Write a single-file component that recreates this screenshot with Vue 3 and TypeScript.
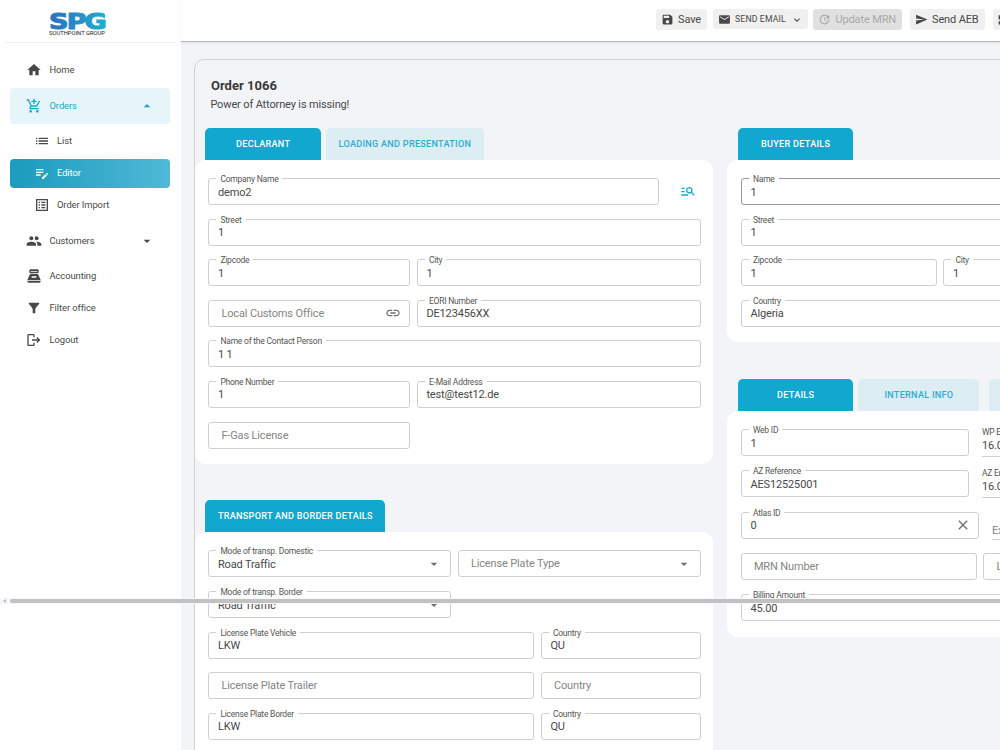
<script setup lang="ts">
import { ref } from 'vue';

interface NavItem {
  label: string;
  icon: string;
  kind?: 'group' | 'sub';
  open?: boolean;
}

interface Field {
  label: string;
  value?: string;
  width: number;
  suffix?: 'select' | 'link' | 'clear';
  type?: 'date' | 'date-low';
  hovered?: boolean;
  lookup?: boolean;
}

interface Panel {
  tabs: { label: string; width: number; gap?: number }[];
  rows: Field[][];
  side: 'left' | 'right';
  name: string;
}

const icons: Record<string, string> = {
  home: 'M10 20v-6h4v6h5v-8h3L12 3 2 12h3v8z',
  cart: 'M11 9h2V6h3V4h-3V1h-2v3H8v2h3v3zm-4 9c-1.1 0-1.99.9-1.99 2S5.9 22 7 22s2-.9 2-2-.9-2-2-2zm10 0c-1.1 0-1.99.9-1.99 2s.89 2 1.99 2 2-.9 2-2-.9-2-2-2zm-9.83-3.25l.03-.12.9-1.63h7.45c.75 0 1.41-.41 1.75-1.03l3.86-7.01L19.42 4h-.01l-1.1 2-2.76 5H8.53l-.13-.27L6.16 6l-.95-2-.94-2H1v2h2l3.6 7.59-1.35 2.45c-.16.28-.25.61-.25.96 0 1.1.9 2 2 2h12v-2H7.42c-.13 0-.25-.11-.25-.25z',
  list: 'M3 13h2v-2H3v2zm0 4h2v-2H3v2zm0-8h2V7H3v2zm4 4h14v-2H7v2zm0 4h14v-2H7v2zM7 7v2h14V7H7z',
  edit: 'M3 10h11v2H3v-2zm0-2h11V6H3v2zm0 8h7v-2H3v2zm15.01-3.13l.71-.71c.39-.39 1.02-.39 1.41 0l.71.71c.39.39.39 1.02 0 1.41l-.71.71-2.12-2.12zm-.71.71l-5.3 5.3V21h2.12l5.3-5.3-2.12-2.12z',
  listAlt: 'M19 5v14H5V5h14m1.1-2H3.9c-.5 0-.9.4-.9.9v16.2c0 .4.4.9.9.9h16.2c.4 0 .9-.5.9-.9V3.9c0-.5-.5-.9-.9-.9zM11 7h6v2h-6V7zm0 4h6v2h-6v-2zm0 4h6v2h-6zM7 7h2v2H7zm0 4h2v2H7zm0 4h2v2H7z',
  people: 'M16 11c1.66 0 2.99-1.34 2.99-3S17.66 5 16 5s-3 1.34-3 3 1.34 3 3 3zm-8 0c1.66 0 2.99-1.34 2.99-3S9.66 5 8 5 5 6.34 5 8s1.34 3 3 3zm0 2c-2.33 0-7 1.17-7 3.5V19h14v-2.5c0-2.33-4.67-3.5-7-3.5zm8 0c-.29 0-.62.02-.97.05 1.16.84 1.97 1.97 1.97 3.45V19h6v-2.5c0-2.33-4.67-3.5-7-3.5z',
  register: 'M17 2H7c-1.1 0-2 .9-2 2v2c0 1.1.9 2 2 2h10c1.1 0 2-.9 2-2V4c0-1.1-.9-2-2-2zm0 3.500H7V4.500h10v1zm3 16.500H4c-1.1 0-2-.9-2-2v-1h20v1c0 1.1-.9 2-2 2zm-1.47-11.81C18.21 9.47 17.49 9 16.7 9H7.3c-.79 0-1.51.47-1.83 1.19L2 18h20l-3.47-7.81zM15.500 15h-7v-1h7v1zm0-2h-7v-1h7v1z',
  filter: 'M4.25 5.61C6.27 8.2 10 13 10 13v6c0 .55.45 1 1 1h2c.55 0 1-.45 1-1v-6s3.72-4.8 5.74-7.39C20.25 4.95 19.78 4 18.95 4H5.04c-.83 0-1.3.95-.79 1.61z',
  logout: 'M4 3h7c1.1 0 2 .9 2 2v3h-2V5H4v14h7v-3h2v3c0 1.1-.9 2-2 2H4c-1.1 0-2-.9-2-2V5c0-1.1.9-2 2-2zm13 4.5L21.5 12 17 16.5l-1.4-1.4 2.1-2.1H9v-2h8.700l-2.1-2.1z',
  save: 'M17 3H5c-1.11 0-2 .9-2 2v14c0 1.1.89 2 2 2h14c1.1 0 2-.9 2-2V7l-4-4zm-5 16c-1.66 0-3-1.34-3-3s1.340-3 3-3 3 1.340 3 3-1.340 3-3 3zm3-10H5V5h10v4z',
  mail: 'M20 4H4c-1.1 0-2 .9-2 2v12c0 1.1.9 2 2 2h16c1.1 0 2-.9 2-2V6c0-1.1-.9-2-2-2zm0 4l-8 5-8-5V6l8 5 8-5v2z',
  update: 'M21 10.12h-6.780l2.740-2.820C14.23 4.600 9.810 4.500 7.080 7.200c-2.730 2.710-2.730 7.080 0 9.800 2.730 2.700 7.150 2.700 9.880 0C18.320 15.650 19 14.080 19 12.100h2c0 1.980-.88 4.550-2.640 6.290-3.510 3.480-9.210 3.480-12.720 0-3.500-3.470-3.530-9.110-.02-12.580s9.140-3.470 12.650 0L21 3v7.120M12.500 8v4.250l3.500 2.080-.72 1.210L11 13V8h1.500z',
  send: 'M2.010 21L23 12 2.010 3 2 10l15 2-15 2z',
  lookup: 'M7 9H2V7h5v2zm0 3H2v2h5v-2zm13.590 7l-3.830-3.830c-.8.520-1.740.830-2.760.830-2.760 0-5-2.240-5-5s2.240-5 5-5 5 2.240 5 5c0 1.020-.31 1.960-.83 2.750L22 17.590 20.590 19zM17 11c0-1.650-1.350-3-3-3s-3 1.350-3 3 1.350 3 3 3 3-1.350 3-3zM2 19h10v-2H2v2z',
  link: 'M3.900 12c0-1.710 1.390-3.100 3.100-3.100h4V7H7c-2.760 0-5 2.240-5 5s2.240 5 5 5h4v-1.900H7c-1.710 0-3.100-1.390-3.100-3.100zM8 13h8v-2H8v2zm9-6h-4v1.900h4c1.710 0 3.100 1.390 3.100 3.100s-1.390 3.100-3.100 3.100h-4V17h4c2.760 0 5-2.240 5-5s-2.240-5-5-5z',
  select: 'M7 10l5 5 5-5z',
  clear: 'M19 6.410L17.590 5 12 10.590 6.410 5 5 6.410 10.590 12 5 17.590 6.410 19 12 13.410 17.590 19 19 17.590 13.410 12z',
  chevron: 'M7.410 8.590L12 13.170l4.590-4.580L18 10l-6 6-6-6z',
};

const nav: NavItem[] = [
  { label: 'Home', icon: 'home' },
  { label: 'Orders', icon: 'cart', kind: 'group', open: true },
  { label: 'List', icon: 'list', kind: 'sub' },
  { label: 'Editor', icon: 'edit', kind: 'sub' },
  { label: 'Order Import', icon: 'listAlt', kind: 'sub' },
  { label: 'Customers', icon: 'people', kind: 'group' },
  { label: 'Accounting', icon: 'register' },
  { label: 'Filter office', icon: 'filter' },
  { label: 'Logout', icon: 'logout' },
];
const current = ref('Editor');

const panels: Panel[] = [
  {
    name: 'declarant',
    side: 'left',
    tabs: [
      { label: 'Declarant', width: 115.5 },
      { label: 'Loading and Presentation', width: 158 },
    ],
    rows: [
      [{ label: 'Company Name', value: 'demo2', width: 451, lookup: true }],
      [{ label: 'Street', value: '1', width: 492.5 }],
      [{ label: 'Zipcode', value: '1', width: 202 }, { label: 'City', value: '1', width: 284 }],
      [{ label: 'Local Customs Office', width: 202, suffix: 'link' }, { label: 'EORI Number', value: 'DE123456XX', width: 284 }],
      [{ label: 'Name of the Contact Person', value: '1 1', width: 492.5 }],
      [{ label: 'Phone Number', value: '1', width: 202 }, { label: 'E-Mail Address', value: 'test@test12.de', width: 284 }],
      [{ label: 'F-Gas License', width: 202 }],
    ],
  },
  {
    name: 'transport',
    side: 'left',
    tabs: [{ label: 'Transport and Border Details', width: 180 }],
    rows: [
      [{ label: 'Mode of transp. Domestic', value: 'Road Traffic', width: 243, suffix: 'select' }, { label: 'License Plate Type', width: 243, suffix: 'select' }],
      [{ label: 'Mode of transp. Border', value: 'Road Traffic', width: 243, suffix: 'select' }],
      [{ label: 'License Plate Vehicle', value: 'LKW', width: 326 }, { label: 'Country', value: 'QU', width: 160 }],
      [{ label: 'License Plate Trailer', width: 326 }, { label: 'Country', width: 160 }],
      [{ label: 'License Plate Border', value: 'LKW', width: 326 }, { label: 'Country', value: 'QU', width: 160 }],
      [],
    ],
  },
  {
    name: 'buyer',
    side: 'right',
    tabs: [{ label: 'Buyer Details', width: 115.5 }],
    rows: [
      [{ label: 'Name', value: '1', width: 492, hovered: true }],
      [{ label: 'Street', value: '1', width: 492 }],
      [{ label: 'Zipcode', value: '1', width: 196 }, { label: 'City', value: '1', width: 289 }],
      [{ label: 'Country', value: 'Algeria', width: 492 }],
    ],
  },
  {
    name: 'details',
    side: 'right',
    tabs: [
      { label: 'Details', width: 115.5 },
      { label: 'Internal Info', width: 121 },
      { label: 'Files', width: 115.5, gap: 5 },
    ],
    rows: [
      [{ label: 'Web ID', value: '1', width: 228 }, { label: 'WP End', value: '16.07.2025', width: 120, type: 'date' }],
      [{ label: 'AZ Reference', value: 'AES12525001', width: 228 }, { label: 'AZ End', value: '16.07.2025', width: 120, type: 'date' }],
      [{ label: 'Atlas ID', value: '0', width: 238, suffix: 'clear' }, { label: 'Export', width: 120, type: 'date-low' }],
      [{ label: 'MRN Number', width: 236 }, { label: 'LRN', width: 249 }],
      [{ label: 'Billing Amount', value: '45.00', width: 492 }],
    ],
  },
];
const columns = (['left', 'right'] as const).map((side) => ({
  side,
  panels: panels.filter((p) => p.side === side),
}));
</script>

<template>
  <div class="app">
    <aside class="sidebar">
      <div class="brand">
        <svg class="logo" viewBox="0 0 58 24">
          <defs>
            <linearGradient id="brand" x1="0" x2="1">
              <stop offset="0" stop-color="#2c6fc0" />
              <stop offset="1" stop-color="#20acd0" />
            </linearGradient>
          </defs>
          <text class="mark" x="1" y="17" textLength="56" lengthAdjust="spacingAndGlyphs" fill="url(#brand)" stroke="url(#brand)">SPG</text>
          <text class="caption" x="1" y="23" textLength="56" lengthAdjust="spacingAndGlyphs">SOUTHPOINT GROUP</text>
        </svg>
      </div>
      <nav class="menu">
        <a
          v-for="item in nav"
          :key="item.label"
          class="item"
          :class="[item.kind, { open: item.open, active: item.label === current }]"
          @click="current = item.label"
        >
          <svg class="icon" viewBox="0 0 24 24"><path :d="icons[item.icon]" /></svg>
          <span class="label">{{ item.label }}</span>
          <svg v-if="item.kind === 'group'" class="icon caret" viewBox="0 0 24 24"><path :d="icons.select" /></svg>
        </a>
      </nav>
    </aside>

    <main class="content">
      <header class="toolbar">
        <button class="btn save"><svg class="icon" viewBox="0 0 24 24"><path :d="icons.save" /></svg>Save</button>
        <button class="btn email">
          <svg class="icon" viewBox="0 0 24 24"><path :d="icons.mail" /></svg>SEND EMAIL
          <svg class="icon chevron" viewBox="0 0 24 24"><path :d="icons.chevron" /></svg>
        </button>
        <button class="btn update" disabled><svg class="icon" viewBox="0 0 24 24"><path :d="icons.update" /></svg>Update MRN</button>
        <button class="btn aeb"><svg class="icon" viewBox="0 0 24 24"><path :d="icons.send" /></svg>Send AEB</button>
        <button class="btn more">
          <svg class="icon" viewBox="0 0 24 24"><path d="M3 4h8v5H8v3H3zM3 15h5v2h3v4H3zM14 4h7v7h-7zM14 14h7v7h-7z" /></svg>
        </button>
      </header>

      <section class="order">
        <h1>Order 1066</h1>
        <p class="notice">Power of Attorney is missing!</p>
        <div class="columns">
          <div v-for="col in columns" :key="col.side" class="column" :class="col.side">
            <div v-for="panel in col.panels" :key="panel.name" class="block" :class="panel.name">
              <div class="tabs">
                <button
                  v-for="(tab, i) in panel.tabs"
                  :key="tab.label"
                  class="tab"
                  :class="{ selected: i === 0 }"
                  :style="{ width: tab.width + 'px', marginLeft: (tab.gap || 0) + 'px' }"
                >{{ tab.label }}</button>
              </div>
              <div class="card">
                <div v-for="(row, r) in panel.rows" :key="r" class="row">
                  <template v-for="(field, f) in row" :key="f">
                    <div
                      class="field"
                      :class="[field.type, { filled: field.value, hovered: field.hovered }]"
                      :style="{ width: field.width + 'px' }"
                    >
                      <label class="name">{{ field.label }}</label>
                      <span v-if="field.value" class="value">{{ field.value }}</span>
                      <svg v-if="field.suffix" class="icon" :class="field.suffix" viewBox="0 0 24 24"><path :d="icons[field.suffix]" /></svg>
                    </div>
                    <svg v-if="field.lookup" class="icon lookup" viewBox="0 0 24 24"><path :d="icons.lookup" /></svg>
                  </template>
                </div>
              </div>
            </div>
          </div>
        </div>
      </section>
    </main>

    <div class="scrollbar">
      <span class="arrow"></span>
      <span class="thumb"></span>
    </div>
  </div>
</template>

<style>
body {
  margin: 0;
  overflow: hidden;
}
</style>

<style scoped>
.app {
  position: relative;
  display: flex;
  width: 1000px;
  height: 750px;
  overflow: hidden;
  background: #f3f4f8;
  color: #484848;
  font-family: Roboto, sans-serif;
  font-size: 11px;
  letter-spacing: -.14px;
}

.icon {
  flex: none;
  width: 16px;
  height: 16px;
  fill: currentColor;
}

button {
  border: none;
  font-family: inherit;
  letter-spacing: inherit;
  color: inherit;
  padding: 0;
}

/* sidebar */
.sidebar {
  flex: none;
  width: 180.5px;
  background: #fff;
}

.brand {
  box-sizing: border-box;
  height: 43px;
  margin: 0 5px;
  padding: 12px 0 0 43px;
  border-bottom: 1px solid #f0f0f0;
}

.logo {
  display: block;
  width: 58px;
  height: 24px;
  overflow: visible;
}

.mark {
  font: bold 21px "DejaVu Sans", sans-serif;
  stroke-width: 1px;
  letter-spacing: -1.5px;
}

.caption {
  font: 400 5px Roboto, sans-serif;
  fill: #222;
  letter-spacing: 0;
}

.menu {
  display: flex;
  flex-direction: column;
  gap: 3.4px;
  padding: 13px 10.5px 0 10px;
}

.item {
  display: flex;
  align-items: center;
  box-sizing: border-box;
  height: 28.6px;
  padding-left: 16px;
  border-radius: 4px;
  font-size: 9.4px;
  letter-spacing: -.08px;
  cursor: pointer;
}

.item .label {
  flex: 1;
  margin-left: 7.5px;
  padding-bottom: 1px;
}

.item.group {
  height: 35.6px;
  padding-right: 15.5px;
}

.item.sub {
  padding-left: 23.5px;
}

.item.open {
  background: #e6f5f9;
  color: #18a6cd;
}

.item.open .caret {
  transform: rotate(180deg);
}

.item.active {
  background: linear-gradient(90deg, #1b9bbd, #4fb9d6);
  color: #fff;
}

/* toolbar */
.content {
  flex: 1;
  min-width: 0;
}

.toolbar {
  display: flex;
  align-items: flex-start;
  box-sizing: border-box;
  height: 42px;
  padding: 9px 0 0 475px;
  background: #fff;
  border-bottom: 1px solid #b5b5b7;
  box-shadow: 0 1px 2px rgba(0, 0, 0, .08);
}

.btn {
  display: flex;
  flex: none;
  align-items: center;
  box-sizing: border-box;
  height: 21px;
  padding-left: 5px;
  border-radius: 3px;
  background: #f0f0f0;
  font-size: 11px;
  white-space: nowrap;
}

.btn .icon {
  width: 13px;
  height: 13px;
  margin-right: 4.5px;
}

.btn.save { width: 51.5px; }
.btn.email {
  width: 95px;
  height: 20px;
  margin-left: 5.5px;
  font-size: 8.7px;
  letter-spacing: .14px;
}
.btn.email .chevron { width: 12px; height: 12px; margin: 1px 0 0 5px; }
.btn.update { width: 88.5px; margin-left: 5.5px; background: #e0e0e0; color: #a8a8a8; }
.btn.aeb { width: 75px; margin-left: 8px; }
.btn.more { width: 60px; margin-left: 8px; padding-left: 4px; }

/* order */
.order {
  box-sizing: border-box;
  width: 1100px;
  height: 800px;
  margin: 17px 0 0 13.4px;
  border: 1px solid #d0d2d6;
  border-radius: 10px;
}

h1 {
  margin: 17.5px 0 0 16px;
  font-size: 13px;
  font-weight: 700;
  line-height: 16px;
  letter-spacing: .04px;
  color: #3a3a3a;
}

.notice {
  margin: 4.5px 0 0 15.5px;
  line-height: 14px;
}

.columns {
  display: flex;
  gap: 14px;
  margin-top: 16px;
}

.column {
  flex: none;
  width: 518.5px;
}

.block + .block {
  margin-top: 37px;
}

.left .block + .block {
  margin-top: 36.4px;
}

.tabs {
  display: flex;
  gap: 5px;
  padding-left: 10.5px;
}

.tab {
  flex: none;
  height: 32px;
  padding-bottom: 1px;
  border-radius: 5px 5px 0 0;
  background: #dcedf4;
  color: #2fabd1;
  font-size: 9.1px;
  font-weight: 500;
  letter-spacing: .28px;
  text-transform: uppercase;
  white-space: nowrap;
}

.tab.selected {
  background: #11a7ce;
  color: #fff;
}

.card {
  display: flex;
  flex-direction: column;
  gap: 13.6px;
  padding: 18px 13px 15.5px 13.5px;
  border-radius: 11px;
  background: #fff;
}

.details .card {
  gap: 14.2px;
}

.row {
  display: flex;
  gap: 6.500px;
  height: 27px;
}

.field {
  position: relative;
  display: flex;
  flex: none;
  align-items: center;
  box-sizing: border-box;
  height: 27px;
  padding: 0 8px 0 8.5px;
  border: 1px solid #cfcfcf;
  border-radius: 3px;
}

.field.hovered {
  border-color: #999;
}

.field .name {
  flex: 1;
  padding-left: 3.5px;
  color: #858585;
  white-space: nowrap;
}

.field.filled .name {
  position: absolute;
  top: -6px;
  left: 7px;
  padding: 0 4px;
  background: #fff;
  color: #555;
  font-size: 8.5px;
  letter-spacing: -.22px;
  line-height: 12px;
}

.field .value {
  flex: 1;
  padding-top: 1px;
  white-space: nowrap;
}

.field .icon {
  color: #6f6f6f;
}

.field .clear {
  margin-right: -1px;
}

.lookup {
  align-self: center;
  margin: -2px 0 0 14px;
  color: #11a7ce;
}

/* underlined date inputs, label sits above the value */
.field.date,
.field.date-low {
  height: 28px;
  margin-left: 6.5px;
  padding: 0;
  border-width: 0 0 1px;
  border-radius: 0;
}

.field.date .name {
  top: -3px;
  left: 0;
  padding: 0;
  background: none;
}

.field.date .value {
  padding-top: 6px;
}

.field.date-low .name {
  padding: 11px 0 0;
}

/* horizontal scrollbar over the page */
.scrollbar {
  position: absolute;
  top: 598px;
  left: 0;
  right: 0;
  display: flex;
  align-items: center;
  height: 6px;
  background: #f6f7fc;
}

.arrow {
  margin: 0 4px 0 3px;
  border: 2px solid transparent;
  border-left: 0;
  border-right: 3px solid #bdbdbd;
}

.thumb {
  flex: 1;
  height: 4px;
  border-radius: 2px 0 0 2px;
  background: #c1c1c1;
}
</style>
